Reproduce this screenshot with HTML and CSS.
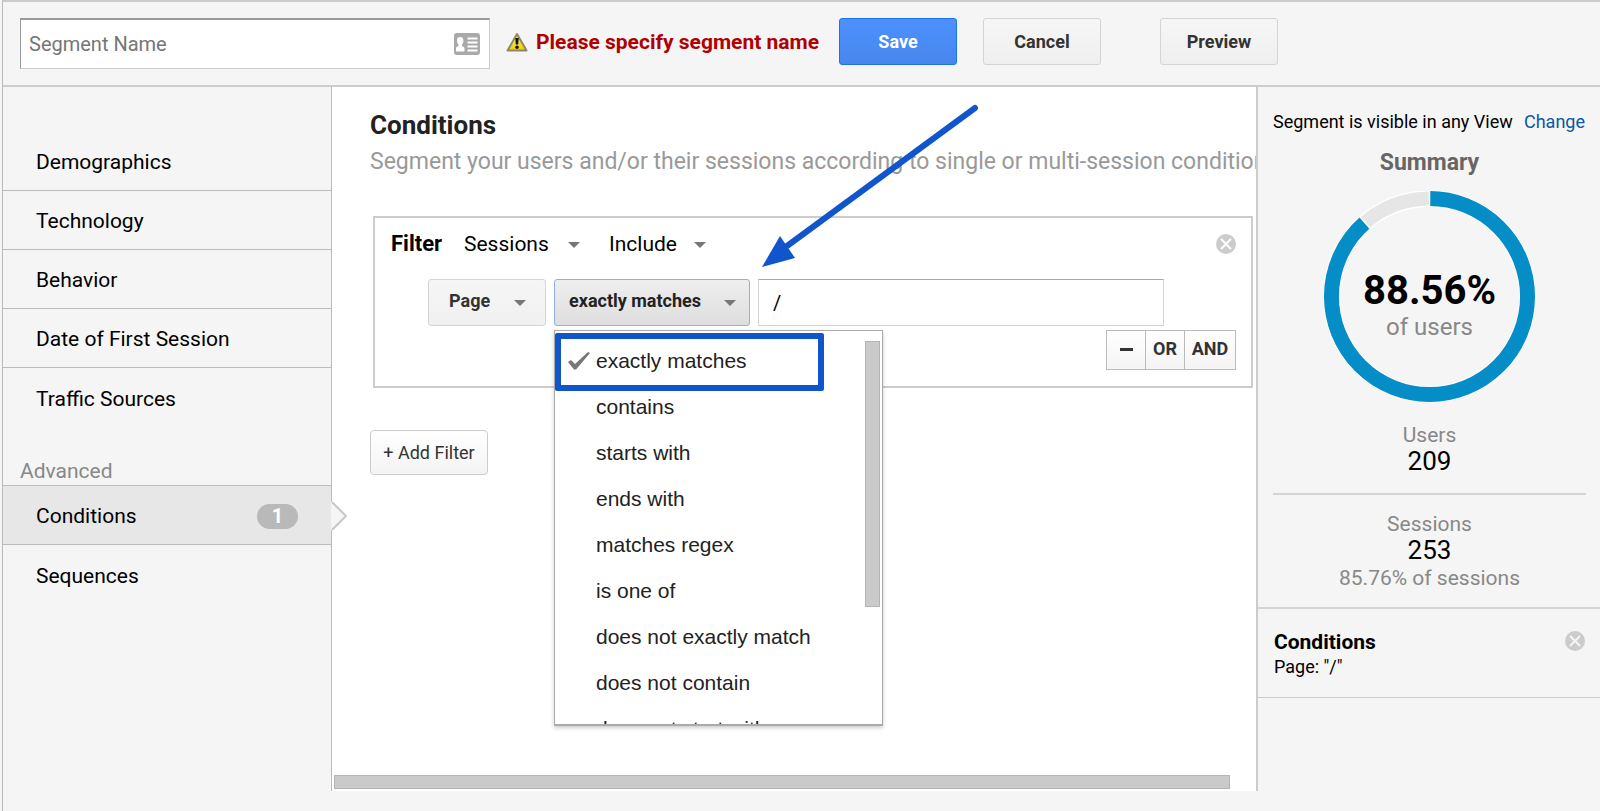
FILE: index.html
```html
<!DOCTYPE html>
<html lang="en">
<head>
<meta charset="utf-8">
<title>Segment builder</title>
<link rel="stylesheet" href="styles.css">
</head>
<body>
<div class="app">
  <header class="toolbar">
    <div class="name-field">
      <input class="name-input" type="text" placeholder="Segment Name" aria-label="Segment Name">
      <svg class="card-icon" viewBox="0 0 26 22" aria-hidden="true">
        <rect width="26" height="22" rx="3" fill="#a9a9a9"/>
        <path d="M2 18.500v-3c0-1.500 1-2 2.500-2.500v-1.500C3.500 10.500 3 9.500 3 7.500 3 5 4.200 4 6.200 4s3.200 1 3.200 3.500c0 2-.5 3-1.500 4V13c1.500.5 2.600 1 2.600 2.500v3zM13.500 4.500h10v2h-10zM13.500 8.500h10v2h-10zM13.500 12.500h10v2h-10zM13.500 16.500h10v2h-10z" fill="#fff"/>
      </svg>
    </div>
    <p class="warning" role="alert">
      <svg class="warning-icon" viewBox="0 0 22 21" aria-hidden="true">
        <defs><linearGradient id="warn" x1="0" y1="0" x2="0" y2="1"><stop offset="0" stop-color="#fff27a"/><stop offset="1" stop-color="#f2cc00"/></linearGradient></defs>
        <path d="M11 2 20.500 18.500H1.500z" fill="url(#warn)" stroke="#8f8868" stroke-width="2" stroke-linejoin="round"/>
        <path d="M9.300 6h3.400l-.5 6.500H9.800z" fill="#111"/><circle cx="11" cy="15.200" r="1.700" fill="#111"/>
      </svg>
      Please specify segment name
    </p>
    <button class="button primary" type="button">Save</button>
    <button class="button cancel" type="button">Cancel</button>
    <button class="button preview" type="button">Preview</button>
  </header>

  <div class="columns">
    <nav class="sidebar">
      <ul class="nav-list">
        <li><a class="nav-item" href="#demographics">Demographics</a></li>
        <li><a class="nav-item" href="#technology">Technology</a></li>
        <li><a class="nav-item" href="#behavior">Behavior</a></li>
        <li><a class="nav-item" href="#first-session">Date of First Session</a></li>
        <li><a class="nav-item" href="#traffic">Traffic Sources</a></li>
      </ul>
      <h2 class="nav-heading">Advanced</h2>
      <ul class="nav-list">
        <li><a class="nav-item selected" href="#conditions" aria-current="page">Conditions <span class="count">1</span>
          <svg class="pointer" viewBox="0 0 17 30" aria-hidden="true"><path d="M0 0 15 15 0 30z" fill="#f5f5f5"/><path d="M1 1 15 15 1 29" fill="none" stroke="#c8c8c8" stroke-width="2"/></svg></a></li>
        <li><a class="nav-item" href="#sequences">Sequences</a></li>
      </ul>
    </nav>

    <main class="content">
      <h1 class="title">Conditions</h1>
      <p class="subtitle">Segment your users and/or their sessions according to single or multi-session conditions.</p>

      <section class="filter">
        <div class="filter-head">
          <strong class="filter-label">Filter</strong>
          <span class="picker"><select class="scope" aria-label="Scope"><option>Sessions</option></select><i class="caret"></i></span>
          <span class="picker"><select class="mode" aria-label="Mode"><option>Include</option></select><i class="caret"></i></span>
          <button class="close" type="button" aria-label="Remove filter"><svg viewBox="0 0 20 20"><circle cx="10" cy="10" r="10" fill="#ccc"/><path d="m5 5 10 10M15 5 5 15" stroke="#fff" stroke-width="2"/></svg></button>
        </div>
        <div class="filter-row">
          <span class="picker"><select class="dropdown dimension" aria-label="Dimension"><option>Page</option></select><i class="caret"></i></span>
          <div class="picker">
            <button class="dropdown match" type="button" aria-haspopup="listbox" aria-expanded="true">exactly matches</button><i class="caret"></i>
            <div class="menu">
              <ul class="menu-list" role="listbox" aria-label="Match type">
                <li class="option checked" role="option" aria-selected="true"><svg class="check" viewBox="0 0 22 18" aria-hidden="true"><path d="m0 10 3-2 4 4L20 0l2 1L8 17.500H6z" fill="#777"/></svg>exactly matches</li>
                <li class="option" role="option">contains</li>
                <li class="option" role="option">starts with</li>
                <li class="option" role="option">ends with</li>
                <li class="option" role="option">matches regex</li>
                <li class="option" role="option">is one of</li>
                <li class="option" role="option">does not exactly match</li>
                <li class="option" role="option">does not contain</li>
                <li class="option" role="option">does not start with</li>
              </ul>
              <div class="menu-thumb"></div>
              <div class="highlight"></div>
            </div>
          </div>
          <input class="value-input" type="text" value="/" aria-label="Value">
        </div>
        <div class="logic">
          <button class="logic-button" type="button" aria-label="Remove condition"><svg class="minus" viewBox="0 0 13 3"><path d="M0 0h13v3H0z" fill="#333"/></svg></button>
          <button class="logic-button" type="button">OR</button>
          <button class="logic-button and" type="button">AND</button>
        </div>
      </section>

      <button class="add-filter" type="button">+ Add Filter</button>
      <div class="content-thumb"></div>

      <svg class="arrow" viewBox="0 0 220 170" aria-hidden="true"><path d="M27 148 215 10" stroke="#1155cc" stroke-width="6" stroke-linecap="round"/><path d="M2 169 20 138 35 160z" fill="#1155cc"/></svg>
    </main>

    <aside class="summary">
      <section class="overview">
        <p class="visibility">Segment is visible in any View <a class="change" href="#change">Change</a></p>
        <h2 class="summary-title">Summary</h2>
        <div class="donut">
          <svg class="ring" viewBox="0 0 212 212" aria-hidden="true">
            <circle cx="106" cy="106" r="98.500" fill="none" stroke="#fff" stroke-width="17"/>
            <circle cx="106" cy="106" r="98.500" fill="none" stroke="#e6e6e6" stroke-width="14"/>
            <circle cx="106" cy="106" r="98.500" fill="none" stroke="#058dc7" stroke-width="15" pathLength="100" stroke-dasharray="88.560 11.440" transform="rotate(-90 106 106)"/>
            <path d="M106 0v15M35.600 25.400 46.100 37.500" stroke="#fff" stroke-width="1.500"/>
          </svg>
          <div class="donut-text"><strong class="percent">88.56%</strong><span class="percent-label">of users</span></div>
        </div>
        <dl class="metric"><dt>Users</dt><dd class="number">209</dd></dl>
        <dl class="metric sessions"><dt>Sessions</dt><dd class="number">253</dd><dd class="share">85.76% of sessions</dd></dl>
      </section>
      <section class="applied">
        <div><h3 class="applied-title">Conditions</h3><p class="applied-text">Page: "/"</p></div>
        <button class="close" type="button" aria-label="Remove conditions"><svg viewBox="0 0 20 20"><circle cx="10" cy="10" r="10" fill="#ccc"/><path d="m5 5 10 10M15 5 5 15" stroke="#f5f5f5" stroke-width="2"/></svg></button>
      </section>
    </aside>
  </div>
</div>
</body>
</html>
```
FILE: styles.css
```css
* { box-sizing: border-box; }
body { margin: 0; background: #f5f5f5; color: #000; font: 21px/28px Roboto, Arial, sans-serif; }
h1, h2, h3, p, ul, dl, dd { margin: 0; padding: 0; }
ul { list-style: none; }
a { text-decoration: none; }
button, input, select { font-family: inherit; margin: 0; }

.app { display: flex; flex-direction: column; min-height: 100vh; margin-left: 2px; padding-bottom: 20px; border-left: 1px solid #bbb; border-top: 2px solid #ccc; }

.toolbar { display: flex; align-items: flex-start; padding: 16px 17px; border-bottom: 2px solid #ccc; }
.name-field { position: relative; width: 470px; }
.name-input { display: block; width: 100%; height: 51px; padding: 0 8px; border: 1px solid #ccc; border-top: 2px solid #999; border-left-color: #999; background: #fff; font-size: 20px; }
.name-input::placeholder { color: #757575; opacity: 1; }
.card-icon { position: absolute; right: 10px; top: 15px; width: 26px; height: 22px; }
.warning { display: flex; align-items: center; gap: 8px; width: 317px; margin: 10px 16px 0; color: #b00000; font-weight: 700; white-space: nowrap; }
.warning-icon { flex: none; width: 22px; height: 21px; }
.button { width: 118px; height: 47px; padding: 0 0 1px; border: 1px solid #d4d4d4; border-radius: 3px; background: linear-gradient(#f6f6f6, #efefef); color: #333; font-size: 18px; font-weight: 700; }
.primary { border-color: #1a73e8; background: linear-gradient(#4d90fe, #4787ed); color: #fff; }
.cancel { margin-left: 26px; }
.preview { margin-left: 59px; }

.columns { display: flex; flex: 1; }
.sidebar { flex: none; width: 329px; padding-top: 45px; border-right: 1px solid #bbb; }
.nav-item { position: relative; display: flex; align-items: center; justify-content: space-between; height: 59px; padding: 2px 33px 0; border-bottom: 1px solid #bbb; color: #000; }
.nav-list li:last-child .nav-item { border-bottom: 0; }
.nav-heading { margin-top: 31px; padding-left: 17px; border-bottom: 1px solid #bbb; color: #888; font-size: 21px; line-height: 27px; font-weight: 400; }
.selected { background: #e7e7e7; }
.count { width: 41px; height: 25px; border-radius: 13px; background: #b9b9b9; color: #fff; font-size: 20px; line-height: 25px; font-weight: 700; text-align: center; }
.pointer { position: absolute; z-index: 2; left: 100%; top: 15px; width: 17px; height: 30px; }

.content { position: relative; display: flex; flex: 1; flex-direction: column; align-items: flex-start; min-width: 0; padding: 22px 3px 2px 2px; background: #fff; }
.title { margin-left: 36px; color: #222; font-size: 26px; line-height: 32px; }
.subtitle { align-self: stretch; margin: 5px -3px 0 36px; overflow: hidden; color: #999; font-size: 23px; line-height: 32px; white-space: nowrap; }
.filter { align-self: stretch; margin: 38px 0 0 39px; padding: 10px 15px 16px 16px; border: 2px solid #ccc; }
.filter-head { display: flex; align-items: center; height: 31px; }
.filter-label { width: 73px; font-size: 22px; }
.picker { position: relative; }
.scope, .mode { appearance: none; height: 30px; padding: 0; border: 0; background: none; color: #000; font-size: 21px; }
.scope { width: 145px; }
.mode { width: 111px; }
.caret { position: absolute; right: 14px; top: 50%; border: 6px solid transparent; border-top-color: #777; border-bottom: 0; margin-top: -2px; pointer-events: none; }
.scope + .caret { right: 29px; }
.close { width: 20px; height: 20px; margin-left: auto; padding: 0; border: 0; background: none; }
.close svg { display: block; }
.filter-row { display: flex; align-items: flex-start; gap: 8px; margin: 20px 72px 0 37px; }
.dropdown { appearance: none; display: block; height: 47px; padding: 0 0 5px 20px; border: 1px solid #d4d4d4; border-radius: 3px; background: linear-gradient(#f6f6f6, #f0f0f0); color: #333; font-size: 18px; font-weight: 700; text-align: left; }
.dimension { width: 118px; }
.match { width: 196px; padding-left: 14px; border-color: #8fb0ea; background: linear-gradient(#eee, #dedede); color: #222; }
.dropdown + .caret { top: 21px; margin-top: 0; right: 20px; }
.match + .caret { right: 14px; }
.value-input { flex: 1; min-width: 0; height: 47px; padding: 0 14px; border: 1px solid #d4d4d4; border-top-color: #aaa; font-size: 20px; }
.logic { display: flex; justify-content: flex-end; margin-top: 4px; }
.logic-button { width: 40px; height: 40px; margin-right: -1px; padding: 0 0 4px; border: 1px solid #bbb; background: linear-gradient(#fff, #f4f4f4); color: #333; font-size: 18px; font-weight: 700; }
.logic-button.and { width: 52px; margin-right: 0; }
.minus { width: 13px; height: 3px; vertical-align: middle; }
.add-filter { width: 118px; height: 45px; margin: 42px 0 20px 36px; padding: 0; border: 1px solid #ccc; border-radius: 4px; background: linear-gradient(#fff, #f4f4f4); color: #333; font-size: 18px; }
.content-thumb { width: 896px; max-width: 100%; height: 14px; margin-top: auto; border: 1px solid #b4b4b4; background: #cacaca; }

.menu { position: absolute; z-index: 3; top: 51px; left: 0; width: 329px; height: 396px; border: 1px solid #aaa; border-bottom-width: 2px; background: #fff; box-shadow: 0 2px 4px rgba(0, 0, 0, .2); }
.menu-list { height: 100%; padding-top: 7px; overflow: hidden; }
.option { position: relative; padding-left: 41px; color: #222; font: 21px/46px "Liberation Sans", Arial, sans-serif; white-space: nowrap; }
.check { position: absolute; left: 13px; top: 14px; width: 22px; height: 18px; }
.menu-thumb { position: absolute; top: 10px; right: 2px; width: 15px; height: 266px; border: 1px solid #b4b4b4; background: #cacaca; }
.highlight { position: absolute; top: 2px; left: 0; width: 269px; height: 58px; border: 6px solid #1155cc; border-radius: 2px; }
.arrow { position: absolute; z-index: 4; left: 428px; top: 11px; width: 220px; height: 170px; }

.summary { flex: none; width: 344px; border-left: 2px solid #ccc; }
.overview { padding: 21px 14px 14px 15px; border-bottom: 2px solid #d4d4d4; text-align: center; }
.visibility { display: flex; justify-content: space-between; padding-right: 1px; font-size: 18px; white-space: nowrap; }
.change { color: #0b57a8; }
.summary-title { margin-top: 13px; color: #666; font-size: 23px; }
.donut { display: grid; place-items: center; margin-top: 14px; }
.ring, .donut-text { grid-area: 1 / 1; }
.ring { width: 211px; height: 211px; }
.donut-text { display: flex; flex-direction: column; padding-top: 20px; }
.percent { font-size: 40px; line-height: 40px; }
.percent-label { color: #888; font-size: 24px; line-height: 32px; }
.metric { padding: 20px 0 19px; color: #888; line-height: 26px; }
.number { color: #000; font-size: 26px; }
.share { line-height: 30px; }
.sessions { padding: 16px 0 0; border-top: 2px solid #d4d4d4; }
.applied { display: flex; align-items: flex-start; padding: 20px 15px 18px 16px; border-bottom: 1px solid #ccc; }
.applied .close { margin-top: 2px; }
.applied-title { font-size: 21px; line-height: 26px; }
.applied-text { font-size: 18px; line-height: 24px; }
```
